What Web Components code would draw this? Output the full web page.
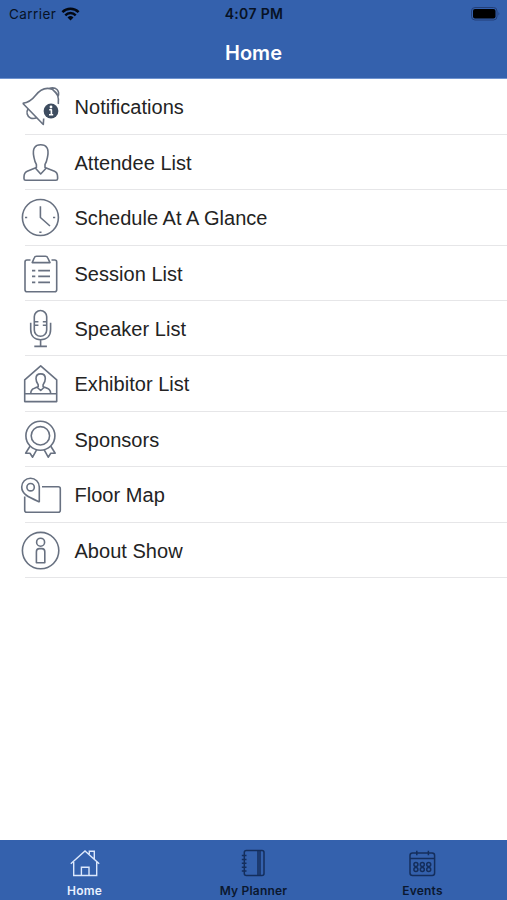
<!DOCTYPE html>
<html lang="en">
<head>
<meta charset="utf-8">
<title>Home</title>
<style>
    html, body { margin: 0; height: 100%; background: #fff; }
    body { font-family: "Liberation Sans", Arial, sans-serif; overflow: hidden; }
</style>
</head>
<body>
<event-app></event-app>

<script>
// Row icons share a 48x54 box, tab icons a 32x32 box
const ICONS = {
    bell: `<path d="M6.7 24.3C13 23.4 16 21 19 17C24 10.5 30 8 36 10.2C41 13.5 43.3 19 42.3 25M6.7 24.3L27.3 45.5L27.7 39.5M33 9.5C36 8.5 39 8.6 41 10.5C42.8 12.5 43 15 42 17.5M36.5 10.4L41.8 16"/><path d="M12 30C10 33 11 37.5 14.5 39C17.5 40.2 20 39 21 38.5"/><circle cx="35" cy="32" r="7.4" fill="#3d4c5f" stroke="none"/><path d="M33.2 30.8H35.4V35.5M33 35.7H37.2" stroke="#fff" stroke-width="1.6"/><circle cx="35" cy="28" r="1.4" fill="#fff" stroke="none"/>`,
    person: `<path d="M20.4 29.5C18.6 27 18.3 24 17.8 21.5C16.2 13.5 19 9.8 24.7 9.8S33.2 13.5 31.6 21.5C31.1 24 30.8 27 29 29.5V32.5L38.5 36.2C41 37.2 41.6 39 41.6 42V43.7Q41.6 45.3 40 45.3H9.7Q8 45.3 8 43.7V42C8 39 8.8 37.2 11.2 36.2L20.4 32.5Z"/><path d="M19.3 33L24.7 39L30.3 33"/>`,
    clock: `<circle cx="24.4" cy="27.5" r="18"/><path d="M24.4 16.2V27.5L34 36M9 27.5H11.2M37 27.5H39.2M23.3 42.2H25.5"/>`,
    clipboard: `<path d="M14.5 14H11Q9 14 9 16V43.7Q9 45.7 11 45.7H38.7Q40.7 45.7 40.7 43.7V16Q40.7 14 38.7 14H35.5"/><path d="M16.2 16.6L18.2 12Q18.8 10.3 20.5 10.3H29.5Q31.2 10.3 31.8 12L34 16.6Z"/><path d="M16 24.6H19.3M22.2 24.6H34M16 30.4H19.3M22.2 30.4H34M16 36.4H19.3M22.2 36.4H34"/>`,
    mic: `<rect x="18.3" y="9.5" width="12.4" height="25.8" rx="6.2"/><path d="M18.3 20.8H22.4M26.8 20.8H30.7M18.3 24.3H22.4M26.8 24.3H30.7M14.7 21.8V28.5C14.7 35 18.5 38.7 24.6 38.7S34.6 35 34.6 28.5V21.8M24.6 38.7V45.4M18.3 45.4H30.9"/>`,
    booth: `<path d="M8.7 23.8L24.7 9.8L40.7 23.8V45.6H8.7ZM8.7 37.8H40.7"/><path d="M14.7 37.8C14.7 33.8 16 33 22.2 30.8V28.8C20.5 26.5 20 24 20 22.5C20 19.3 21.5 17.9 24.7 17.9S29.3 19.3 29.3 22.5C29.3 24 28.8 26.5 27.1 28.8V30.8C33.5 33 34.7 33.8 34.7 37.8M21.3 31.5L24.7 34.5L28 31.5"/>`,
    ribbon: `<circle cx="24.4" cy="23.8" r="14.5"/><circle cx="24.4" cy="23.8" r="9.2"/><path d="M14 34.3L9.6 41.2L14 41.3L16.6 45.2L20.6 37.8M34.8 34.3L39.2 41.2L34.8 41.3L32.2 45.2L28.2 37.8"/>`,
    map: `<path d="M23.3 34.8C13.5 30.5 5.7 27.5 5.7 20A8.8 8.8 0 0 1 23.3 20Z"/><circle cx="14.6" cy="20.2" r="3.7"/><path d="M26 19.8H42.3Q44.3 19.8 44.3 21.8V43.3Q44.3 45.3 42.3 45.3H10.7Q8.7 45.3 8.7 43.3V29.5"/>`,
    info: `<circle cx="24.6" cy="27.6" r="18.2"/><circle cx="24.6" cy="19.2" r="4"/><path d="M20.4 39.8V28.8Q20.4 25.6 23.5 25.6H25.8Q28.8 25.6 28.8 28.8V39.8Z"/>`,
    home: `<path d="M1.8 15.7L16 3L30.2 15.7M4.7 14V27.5H27.7V14M12.4 27.5V19.3H20V27.5M20.3 6V3.2H25.3V11"/>`,
    planner: `<rect x="6.3" y="2.5" width="19.7" height="25" rx="2"/><path d="M20 2.5V27.5M22 2.5V27.5M3.8 7.5H8.5M3.8 11.4H8.5M3.8 15.3H8.5M3.8 19.2H8.5M3.8 23.1H8.5"/>`,
    calendar: `<rect x="3" y="5" width="24.6" height="22.5" rx="2.5"/><path d="M3 10.4H27.6M9.8 2.8V7.2M21.4 2.8V7.2"/><g><circle cx="8.9" cy="16.4" r="2"/><circle cx="15.3" cy="16.4" r="2"/><circle cx="21.7" cy="16.4" r="2"/><circle cx="8.9" cy="21.4" r="2"/><circle cx="15.3" cy="21.4" r="2"/><circle cx="21.7" cy="21.4" r="2"/></g>`
};

class StatusBar extends HTMLElement {
    constructor() {
        super();
        this.attachShadow({ mode: 'open' });
        this.shadowRoot.innerHTML = `
            <style>
                :host {
                    display: grid;
                    grid-template-columns: 1fr auto 1fr;
                    align-items: center;
                    height: 27px;
                    padding: 0 6px 0 9px;
                    font: 13.5px/28px Inter, sans-serif;
                    color: #071225;
                }
                .carrier { display: flex; align-items: center; gap: 5px; letter-spacing: 0.45px; }
                .time { font-weight: 600; font-size: 14px; letter-spacing: 0.35px; margin-right: 2px; }
                .battery { justify-self: end; }
                svg { display: block; }
            </style>
            <div class="carrier">
                <span>Carrier</span>
                <svg width="19" height="14" viewBox="0 0 18 14" fill="none" stroke="#030812" stroke-width="2.5">
                    <path d="M.9 5.2A11.5 11.5 0 0 1 17.1 5.2M3.8 8.3A7.3 7.3 0 0 1 14.2 8.3"/>
                    <path d="M9 13.5L6 10.4A4.3 4.3 0 0 1 12 10.4Z" fill="#030812" stroke="none"/>
                </svg>
            </div>
            <span class="time">4:07 PM</span>
            <svg class="battery" width="30" height="14" viewBox="0 0 30 14">
                <rect x=".5" y=".5" width="25.5" height="12.5" rx="3.5" fill="none" stroke="#233f78"/>
                <rect x="2" y="2" width="22.5" height="9.5" rx="2" fill="#000"/>
                <path d="M27.5 4.8Q29.3 6.7 27.5 8.7Z" fill="#233f78"/>
            </svg>
        `;
    }
}
customElements.define('status-bar', StatusBar);

class NavBar extends HTMLElement {
    constructor() {
        super();
        this.attachShadow({ mode: 'open' });
        this.shadowRoot.innerHTML = `
            <style>
                :host {
                    display: block;
                    height: 52.4px;
                    box-sizing: border-box;
                    border-bottom: 1px solid #6f93cf;
                    text-align: center;
                    font: 600 20px/52px Inter, sans-serif;
                    color: #fff;
                }
            </style>
            <slot></slot>
        `;
    }
}
customElements.define('nav-bar', NavBar);

class MenuRow extends HTMLElement {
    constructor() {
        super();
        this.attachShadow({ mode: 'open' });
    }

    connectedCallback() {
        this.shadowRoot.innerHTML = `
            <style>
                :host {
                    display: block;
                    height: 55.4px;
                    padding-left: 16px;
                }
                .body { display: flex; height: 54.4px; }
                svg { flex: none; fill: none; stroke: #687181; stroke-width: 1.6; stroke-linejoin: round; }
                .label {
                    flex: 1;
                    padding-left: 10.5px;
                    font-size: 20px;
                    line-height: 57px;
                    letter-spacing: 0.03px;
                    color: #232323;
                    white-space: nowrap;
                }
                .line { margin-left: 9px; height: 1px; background: #e6e6e8; }
            </style>
            <div class="body">
                <svg width="48" height="54" viewBox="0 0 48 54">${ICONS[this.getAttribute('icon')]}</svg>
                <span class="label"><slot></slot></span>
            </div>
            <div class="line"></div>
        `;
    }
}
customElements.define('menu-row', MenuRow);

class TabItem extends HTMLElement {
    constructor() {
        super();
        this.attachShadow({ mode: 'open' });
    }

    connectedCallback() {
        this.shadowRoot.innerHTML = `
            <style>
                :host {
                    flex: 1;
                    display: flex;
                    flex-direction: column;
                    align-items: center;
                    padding-top: 8px;
                    color: #0b1830;
                    font: 600 12px/14px Inter, sans-serif;
                    letter-spacing: 0.2px;
                }
                :host([active]) { color: #e8f0ff; }
                svg { display: block; fill: none; stroke: #142e5c; stroke-width: 1.5; }
                :host([active]) svg { stroke: #dce8fc; stroke-width: 1.4; }
                span { margin-top: 4px; }
            </style>
            <svg width="32" height="32" viewBox="0 0 32 32">${ICONS[this.getAttribute('icon')]}</svg>
            <span><slot></slot></span>
        `;
    }
}
customElements.define('tab-item', TabItem);

class EventApp extends HTMLElement {
    constructor() {
        super();
        this.attachShadow({ mode: 'open' });
        this.shadowRoot.innerHTML = `
            <style>
                :host { display: flex; flex-direction: column; height: 900px; width: 507px; background: #fff; }
                header { background: #3461ad; }
                main { flex: 1; }
                footer { display: flex; height: 60px; background: #3461ad; }
            </style>
            <header>
                <status-bar></status-bar>
                <nav-bar>Home</nav-bar>
            </header>
            <main>
                <menu-row icon="bell">Notifications</menu-row>
                <menu-row icon="person">Attendee List</menu-row>
                <menu-row icon="clock">Schedule At A Glance</menu-row>
                <menu-row icon="clipboard">Session List</menu-row>
                <menu-row icon="mic">Speaker List</menu-row>
                <menu-row icon="booth">Exhibitor List</menu-row>
                <menu-row icon="ribbon">Sponsors</menu-row>
                <menu-row icon="map">Floor Map</menu-row>
                <menu-row icon="info">About Show</menu-row>
            </main>
            <footer>
                <tab-item icon="home" active>Home</tab-item>
                <tab-item icon="planner">My Planner</tab-item>
                <tab-item icon="calendar">Events</tab-item>
            </footer>
        `;
    }
}
customElements.define('event-app', EventApp);
</script>
</body>
</html>
